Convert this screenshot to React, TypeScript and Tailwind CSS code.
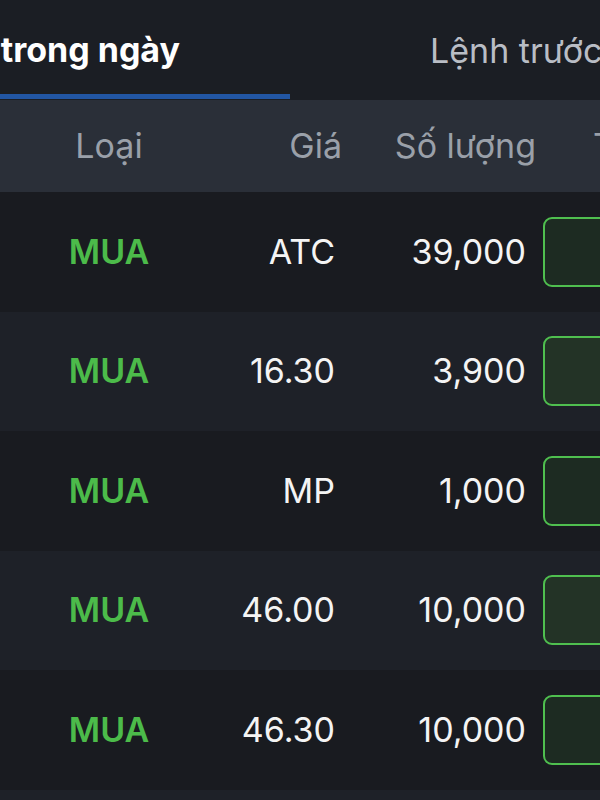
import React from "react";

const rows = [
  { price: "ATC", qty: "39,000" },
  { price: "16.30", qty: "3,900" },
  { price: "MP", qty: "1,000" },
  { price: "46.00", qty: "10,000" },
  { price: "46.30", qty: "10,000" },
  { price: "46.50", qty: "5,000" },
];

export default function App() {
  return (
    <div
      className="w-[600px] h-[800px] overflow-hidden bg-[#1b1e24]"
      style={{ fontFamily: "Inter, 'Liberation Sans', sans-serif" }}
    >
      {/* Tabs */}
      <div className="flex h-[100px] bg-[#1b1e24]">
        <div className="w-[290px] shrink-0 flex flex-col">
          <div className="flex-1 flex items-center justify-end pr-[110px] pt-[6px] overflow-hidden whitespace-nowrap">
            <span className="text-[34px] leading-none font-bold text-white">Lệnh trong ngày</span>
          </div>
          <div className="h-[5px] bg-[#2256a3] mb-[1px]" />
        </div>
        <div className="flex-1 min-w-0 flex items-center pl-[140px] pt-[2px] whitespace-nowrap overflow-hidden">
          <span className="text-[34px] leading-none text-[#b9bdc5]">Lệnh trước</span>
        </div>
      </div>

      {/* Header */}
      <div className="flex items-center h-[92px] bg-[#2a2f38] text-[34px] leading-none text-[#9aa0a9] whitespace-nowrap overflow-hidden">
        <div className="w-[218px] shrink-0 text-center">Loại</div>
        <div className="w-[124px] shrink-0 text-right">Giá</div>
        <div className="w-[194px] shrink-0 text-right">Số lượng</div>
        <div className="ml-[57px] shrink-0">Trạng thái</div>
      </div>

      {/* Rows */}
      {rows.map((r, i) => (
        <div
          key={i}
          className={`flex items-center h-[119.5px] text-[34px] leading-none whitespace-nowrap overflow-hidden ${
            i % 2 === 0 ? "bg-[#191b20]" : "bg-[#1e2128]"
          }`}
        >
          <div className="w-[218px] shrink-0 text-center font-semibold text-[#4cbb4a]">MUA</div>
          <div className="w-[117px] shrink-0 text-right text-[#f4f4f4]">{r.price}</div>
          <div className="w-[191px] shrink-0 text-right text-[#f4f4f4]">{r.qty}</div>
          <div
            className={`ml-[17px] w-[100px] h-[70px] shrink-0 rounded-[9px] border-[2.5px] border-[#4fbf4f] ${
              i % 2 === 0 ? "bg-[#1d2b22]" : "bg-[#233326]"
            }`}
          />
        </div>
      ))}
    </div>
  );
}
